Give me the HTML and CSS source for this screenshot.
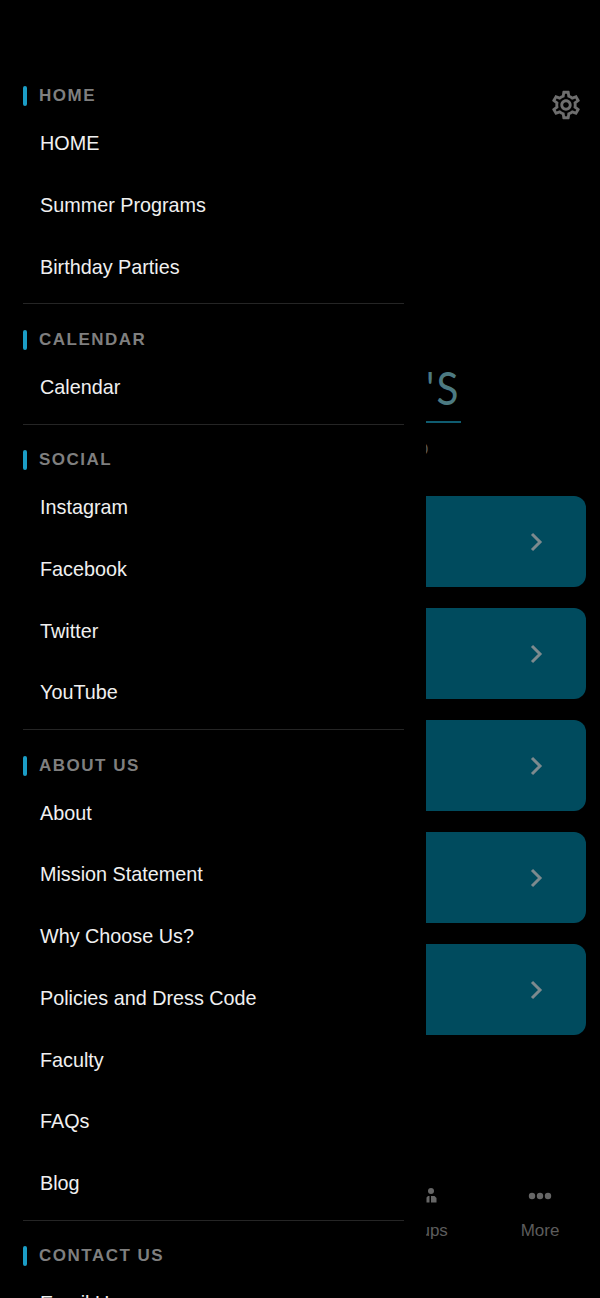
FILE: index.html
```html
<!DOCTYPE html>
<html lang="en">
<head>
  <meta charset="UTF-8">
  <meta name="viewport" content="width=device-width, initial-scale=1.0">
  <title>Menu</title>
  <link rel="stylesheet" href="styles.css">
</head>
<body>
  <div class="page">
    <div class="topbar">
      <svg class="gear" viewBox="0 0 24 24"><path d="M19.43 12.98c.04-.32.07-.64.07-.98 0-.34-.03-.66-.07-.98l2.11-1.65c.19-.15.24-.42.12-.64l-2-3.46c-.09-.16-.26-.25-.44-.25-.06 0-.12.01-.17.03l-2.49 1c-.52-.4-1.08-.73-1.69-.98l-.38-2.65C14.46 2.18 14.25 2 14 2h-4c-.25 0-.46.18-.49.42l-.38 2.65c-.61.25-1.17.59-1.69.98l-2.49-1c-.06-.02-.12-.03-.18-.03-.17 0-.34.09-.43.25l-2 3.46c-.13.22-.07.49.12.64l2.11 1.65c-.04.32-.07.65-.07.98 0 .33.03.66.07.98l-2.11 1.65c-.19.15-.24.42-.12.64l2 3.46c.09.16.26.25.44.25.06 0 .12-.01.17-.03l2.49-1c.52.4 1.08.73 1.69.98l.38 2.65c.03.24.24.42.49.42h4c.25 0 .46-.18.49-.42l.38-2.65c.61-.25 1.17-.59 1.69-.98l2.49 1c.06.02.12.03.18.03.17 0 .34-.09.43-.25l2-3.46c.12-.22.07-.49-.12-.64l-2.11-1.65zm-1.98-1.71c.04.31.05.52.05.73 0 .21-.02.43-.05.73l-.14 1.13.89.7 1.08.84-.7 1.21-1.27-.51-1.04-.42-.9.68c-.43.32-.84.56-1.25.73l-1.06.43-.16 1.13-.2 1.35h-1.4l-.19-1.35-.16-1.13-1.06-.43c-.43-.18-.83-.41-1.23-.71l-.91-.7-1.06.43-1.27.51-.7-1.21 1.08-.84.89-.7-.14-1.13c-.03-.31-.05-.54-.05-.74s.02-.43.05-.73l.14-1.13-.89-.7-1.08-.84.7-1.21 1.27.51 1.04.42.9-.68c.43-.32.84-.56 1.25-.73l1.06-.43.16-1.13.2-1.35h1.39l.19 1.35.16 1.13 1.06.43c.43.18.83.41 1.23.71l.91.7 1.06-.43 1.27-.51.7 1.21-1.07.85-.89.7.14 1.13zM12 8c-2.21 0-4 1.79-4 4s1.79 4 4 4 4-1.79 4-4-1.79-4-4-4zm0 6c-1.1 0-2-.9-2-2s.9-2 2-2 2 .9 2 2-.9 2-2 2z"/></svg>
    </div>

    <div class="logo">
      <span class="logo-text">'S</span>
    </div>
    <div class="tagline">O</div>

    <div class="cards">
      <div class="card"><svg class="chevron" viewBox="0 0 14 20"><path d="M3 2l8 8-8 8"/></svg></div>
      <div class="card"><svg class="chevron" viewBox="0 0 14 20"><path d="M3 2l8 8-8 8"/></svg></div>
      <div class="card"><svg class="chevron" viewBox="0 0 14 20"><path d="M3 2l8 8-8 8"/></svg></div>
      <div class="card"><svg class="chevron" viewBox="0 0 14 20"><path d="M3 2l8 8-8 8"/></svg></div>
      <div class="card"><svg class="chevron" viewBox="0 0 14 20"><path d="M3 2l8 8-8 8"/></svg></div>
    </div>

    <div class="tabbar">
      <div class="tab"></div>
      <div class="tab"></div>
      <div class="tab"></div>
      <div class="tab">
        <svg class="tab-icon" viewBox="0 0 34 16">
          <circle cx="17" cy="3.5" r="3.5"/>
          <circle cx="28" cy="3" r="3"/>
          <circle cx="6" cy="3" r="3"/>
          <path d="M23.5 14.5v-5l1.5-1.5h1.500v6.500zM28 8h3.500l2 2v4.500h-5.500z"/>
        </svg>
        <span class="tab-label">Groups</span>
      </div>
      <div class="tab">
        <svg class="tab-icon" viewBox="0 0 34 16">
          <circle cx="9" cy="8" r="3.200"/>
          <circle cx="17" cy="8" r="3.200"/>
          <circle cx="25" cy="8" r="3.200"/>
        </svg>
        <span class="tab-label">More</span>
      </div>
    </div>
  </div>

  <nav class="drawer">
    <section class="menu-section">
      <h3 class="menu-title">HOME</h3>
      <a class="menu-item">HOME</a>
      <a class="menu-item">Summer Programs</a>
      <a class="menu-item">Birthday Parties</a>
    </section>
    <section class="menu-section">
      <h3 class="menu-title">CALENDAR</h3>
      <a class="menu-item">Calendar</a>
    </section>
    <section class="menu-section">
      <h3 class="menu-title">SOCIAL</h3>
      <a class="menu-item">Instagram</a>
      <a class="menu-item">Facebook</a>
      <a class="menu-item">Twitter</a>
      <a class="menu-item">YouTube</a>
    </section>
    <section class="menu-section">
      <h3 class="menu-title">ABOUT US</h3>
      <a class="menu-item">About</a>
      <a class="menu-item">Mission Statement</a>
      <a class="menu-item">Why Choose Us?</a>
      <a class="menu-item">Policies and Dress Code</a>
      <a class="menu-item">Faculty</a>
      <a class="menu-item">FAQs</a>
      <a class="menu-item">Blog</a>
    </section>
    <section class="menu-section">
      <h3 class="menu-title">CONTACT US</h3>
      <a class="menu-item">Email Us</a>
    </section>
  </nav>
</body>
</html>
```

FILE: styles.css
```css
* {
  box-sizing: border-box;
}

html,
body {
  margin: 0;
  height: 1298px;
  overflow: hidden;
  background: #000;
}

body {
  position: relative;
  font-family: "Liberation Sans", Arial, sans-serif;
}

/* dimmed page behind the menu */
.page {
  height: 1298px;
  display: flex;
  flex-direction: column;
}

.topbar {
  display: flex;
  justify-content: flex-end;
  padding: 88px 17px 0 0;
}

.gear {
  width: 34px;
  height: 34px;
  fill: #6e6e6e;
}

.logo {
  margin: 248px 0 0 426px;
  width: 35px;
  height: 53px;
  border-bottom: 2px solid #0f5c70;
}

.logo-text {
  display: block;
  font-family: Lato, sans-serif;
  font-size: 46px;
  line-height: 36px;
  letter-spacing: 2.500px;
  color: #4c7a82;
  white-space: nowrap;
  transform: scaleX(0.88);
  transform-origin: left;
}

.tagline {
  margin: 18px 0 0 416px;
  font-size: 16px;
  line-height: 18px;
  color: #555;
}

.cards {
  margin: 37px 14px 0;
  display: flex;
  flex-direction: column;
  gap: 21px;
}

.card {
  height: 91px;
  background: #004b5e;
  border-radius: 12px;
  display: flex;
  align-items: center;
  justify-content: flex-end;
  padding-right: 43px;
}

.chevron {
  width: 14px;
  height: 20px;
  fill: none;
  stroke: #7d8a8e;
  stroke-width: 3;
}

.tabbar {
  margin-top: 153px;
  display: grid;
  grid-template-columns: repeat(5, 1fr);
}

.tab {
  display: flex;
  flex-direction: column;
  align-items: center;
}

.tab-icon {
  width: 34px;
  height: 16px;
  fill: #666;
}

.tab-label {
  margin-top: 17px;
  font-size: 17px;
  line-height: 20px;
  color: #5c5c5c;
}

/* side menu */
.drawer {
  position: absolute;
  top: 0;
  left: 0;
  width: 426px;
  height: 1298px;
  overflow: hidden;
  background: #000;
  padding: 79px 22px 0 23px;
}

.menu-section {
  padding-bottom: 5px;
  margin-bottom: 18.500px;
  border-bottom: 1px solid #252525;
}

.menu-title {
  display: flex;
  align-items: center;
  height: 34px;
  margin: 0;
  font-size: 17px;
  font-weight: 700;
  letter-spacing: 1.500px;
  color: #7f7f7f;
}

.menu-title::before {
  content: "";
  width: 4px;
  height: 20px;
  margin-right: 12px;
  border-radius: 2px;
  background: #1b9dc6;
}

.menu-item {
  display: block;
  height: 61.750px;
  padding-left: 17px;
  font-size: 19.800px;
  line-height: 61.750px;
  color: #f0f0f0;
}
```
